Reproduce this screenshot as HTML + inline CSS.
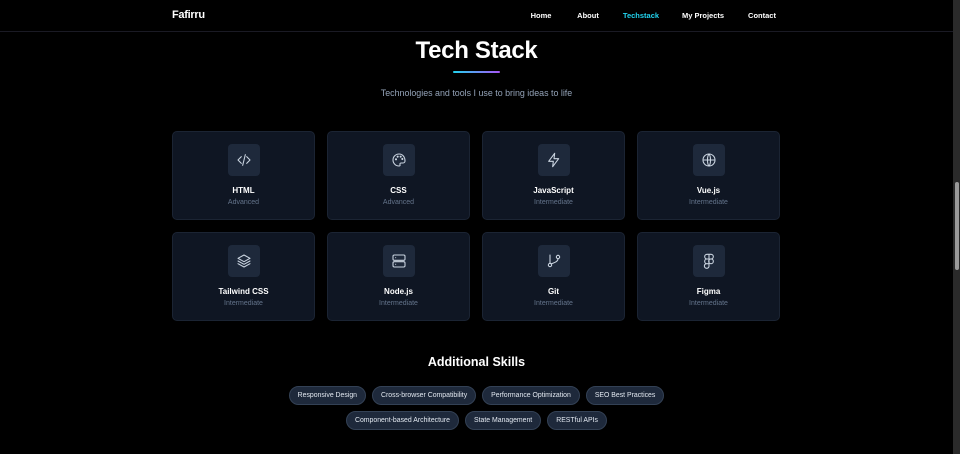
<!DOCTYPE html>
<html><head><meta charset="utf-8"><style>
*{margin:0;padding:0;box-sizing:border-box}
html,body{width:960px;height:454px;overflow:hidden;background:#000;font-family:"Liberation Sans",sans-serif;color:#fff}
.nav{position:absolute;left:0;top:0;width:953px;height:32px;border-bottom:1px solid #1a1a24}
.logo{position:absolute;left:172px;top:9px;font-size:11px;font-weight:bold;letter-spacing:-0.3px}
.nav a{position:absolute;top:11px;font-size:7.5px;font-weight:bold;color:#fff;text-decoration:none;transform:translateX(-50%)}
h1{position:absolute;left:0;width:953px;top:37px;text-align:center;font-size:24px;font-weight:bold;letter-spacing:-0.3px}
.bar{position:absolute;left:453px;top:71px;width:47px;height:2px;border-radius:2px;background:linear-gradient(90deg,#22d3ee,#a855f7)}
.sub{position:absolute;left:0;width:953px;top:88px;text-align:center;font-size:8.9px;color:#94a3b8}
.card{position:absolute;width:143px;height:89px;background:#0f1623;border:1px solid #1b2433;border-radius:5px;text-align:center}
.ic{position:absolute;left:55px;top:12px;width:32px;height:32px;background:#1e293b;border-radius:4px;display:flex;align-items:center;justify-content:center}
.ic svg{width:16px;height:16px;fill:none;stroke:#cbd5e1;stroke-width:1.6;stroke-linecap:round;stroke-linejoin:round}
.t{position:absolute;left:0;width:100%;top:54px;font-size:8px;font-weight:bold}
.l{position:absolute;left:0;width:100%;top:67px;font-size:7px;color:#64748b}
h2{position:absolute;left:0;width:953px;top:355px;text-align:center;font-size:12.5px;font-weight:bold}
.row{position:absolute;left:0;width:953px;display:flex;justify-content:center;gap:6px}
.pill{height:19px;padding:0 8px;border-radius:10px;background:#1e293b;border:1px solid #334155;font-size:6.9px;color:#e2e8f0;line-height:17px;white-space:nowrap}
.sb{position:absolute;left:953px;top:0;width:7px;height:454px;background:#2a2a2a}
.th{position:absolute;left:955px;top:182px;width:4px;height:88px;background:#9a9a9a;border-radius:2px}
</style></head><body>
<div class="nav"><div class="logo">Fafirru</div>
<a style="left:541px">Home</a><a style="left:588px">About</a><a style="left:641px;color:#22d3ee">Techstack</a><a style="left:703px">My Projects</a><a style="left:762px">Contact</a></div>
<h1>Tech Stack</h1><div class="bar"></div>
<div class="sub">Technologies and tools I use to bring ideas to life</div>

<div class="card" style="left:172px;top:131px"><div class="ic"><svg viewBox="0 0 24 24"><path d="M8 7l-5 5 5 5M16 7l5 5-5 5M14 4l-4 16"/></svg></div><div class="t">HTML</div><div class="l">Advanced</div></div>
<div class="card" style="left:327px;top:131px"><div class="ic"><svg viewBox="0 0 24 24"><path d="M12 3a9 9 0 0 0 0 18c1.5 0 2-1 1.5-2s0-2.5 1.5-2.5H18a3 3 0 0 0 3-3C21 7 17 3 12 3z"/><circle cx="7.5" cy="11" r=".8"/><circle cx="10" cy="7" r=".8"/><circle cx="14.5" cy="7" r=".8"/><circle cx="17" cy="10.5" r=".8"/></svg></div><div class="t">CSS</div><div class="l">Advanced</div></div>
<div class="card" style="left:482px;top:131px"><div class="ic"><svg viewBox="0 0 24 24"><path d="M13 2L4 14h7l-1 8 9-12h-7z"/></svg></div><div class="t">JavaScript</div><div class="l">Intermediate</div></div>
<div class="card" style="left:637px;top:131px"><div class="ic"><svg viewBox="0 0 24 24"><circle cx="12" cy="12" r="9"/><path d="M3 12h18M12 3c3 3 3 15 0 18M12 3c-3 3-3 15 0 18"/></svg></div><div class="t">Vue.js</div><div class="l">Intermediate</div></div>

<div class="card" style="left:172px;top:232px"><div class="ic"><svg viewBox="0 0 24 24"><path d="M12 3l9 5-9 5-9-5z"/><path d="M3 12l9 5 9-5M3 16l9 5 9-5"/></svg></div><div class="t">Tailwind CSS</div><div class="l">Intermediate</div></div>
<div class="card" style="left:327px;top:232px"><div class="ic"><svg viewBox="0 0 24 24"><rect x="3" y="3" width="18" height="8" rx="2"/><rect x="3" y="13" width="18" height="8" rx="2"/><path d="M7 7h.01M7 17h.01"/></svg></div><div class="t">Node.js</div><div class="l">Intermediate</div></div>
<div class="card" style="left:482px;top:232px"><div class="ic"><svg viewBox="0 0 24 24"><circle cx="6" cy="18" r="2.5"/><circle cx="18" cy="6" r="2.5"/><path d="M6 3v12.5M18 8.5c0 5-6 6-10.5 8"/></svg></div><div class="t">Git</div><div class="l">Intermediate</div></div>
<div class="card" style="left:637px;top:232px"><div class="ic"><svg viewBox="0 0 24 24"><path d="M9 2h3v7H9a3.5 3.5 0 0 1 0-7zM12 2h3a3.5 3.5 0 0 1 0 7h-3zM9 9h3v7H9a3.5 3.5 0 0 1 0-7zM9 16h3v3a3.5 3.5 0 1 1-3-3z"/><circle cx="15" cy="12.5" r="3.5"/></svg></div><div class="t">Figma</div><div class="l">Intermediate</div></div>

<h2>Additional Skills</h2>
<div class="row" style="top:386px"><div class="pill">Responsive Design</div><div class="pill">Cross-browser Compatibility</div><div class="pill">Performance Optimization</div><div class="pill">SEO Best Practices</div></div>
<div class="row" style="top:411px"><div class="pill">Component-based Architecture</div><div class="pill">State Management</div><div class="pill">RESTful APIs</div></div>
<div class="sb"></div><div class="th"></div>
</body></html>
